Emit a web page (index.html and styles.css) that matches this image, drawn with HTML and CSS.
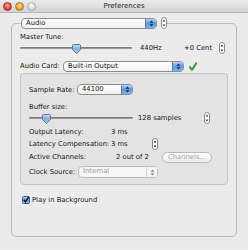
FILE: index.html
```html
<!DOCTYPE html>
<html lang="en">
<head>
    <meta charset="UTF-8">
    <title>Preferences</title>
    <link rel="stylesheet" href="styles.css">
</head>
<body>
    <div class="window">
        <div class="titlebar">
            <div class="lights">
                <span class="light red"></span>
                <span class="light yellow"></span>
                <span class="light off"></span>
            </div>
            <div class="title">Preferences</div>
        </div>

        <fieldset class="group">
            <legend class="group-legend">
                <div class="group-head">
                    <div class="popup audio-popup">
                        <span class="popup-text">Audio</span>
                        <span class="popup-cap"><svg width="5" height="7" viewBox="0 0 5 7"><path d="M2.5 0.5 L4.5 2.8 H0.5Z M2.5 6.5 L4.5 4.2 H0.5Z" fill="#1c2b45"/></svg></span>
                    </div>
                    <span class="stepper"><svg width="6" height="12" viewBox="0 0 6 12"><rect x=".5" y=".5" width="5" height="11" rx="2.5" fill="#fff" stroke="#8c8c8c"/><path d="M3 2.6 L4.4 4.6 H1.6Z M3 9.4 L4.4 7.4 H1.6Z" fill="#333"/></svg></span>
                </div>
            </legend>

            <div class="label-row tune-label">Master Tune:</div>
            <div class="slider-row">
                <div class="slider tune-slider">
                    <span class="track"></span>
                    <span class="thumb" style="left: 52px;"><svg width="9" height="10" viewBox="0 0 9 10"><defs><linearGradient id="tb1" x1="0" y1="0" x2="0" y2="1"><stop offset="0" stop-color="#c9e0f7"/><stop offset="0.5" stop-color="#7fb2e8"/><stop offset="1" stop-color="#a8d0f7"/></linearGradient></defs><path d="M0.5 1.5 Q0.5 0.5 1.5 0.5 H7.5 Q8.5 0.5 8.5 1.5 V5.5 L4.5 9.5 L0.5 5.5Z" fill="url(#tb1)" stroke="#5f7394"/></svg></span>
                </div>
                <span class="hz">440Hz</span>
                <span class="cent">+0 Cent</span>
                <span class="stepper"><svg width="6" height="12" viewBox="0 0 6 12"><rect x=".5" y=".5" width="5" height="11" rx="2.5" fill="#fff" stroke="#8c8c8c"/><path d="M3 2.6 L4.4 4.6 H1.6Z M3 9.4 L4.4 7.4 H1.6Z" fill="#333"/></svg></span>
            </div>

            <div class="card-row">
                <span class="card-label">Audio Card:</span>
                <div class="popup card-popup">
                    <span class="popup-text">Built-in Output</span>
                    <span class="popup-cap"><svg width="5" height="7" viewBox="0 0 5 7"><path d="M2.5 0.5 L4.5 2.8 H0.5Z M2.5 6.5 L4.5 4.2 H0.5Z" fill="#1c2b45"/></svg></span>
                </div>
                <span class="ok-mark"><svg width="8" height="9" viewBox="0 0 8 9"><path d="M0.9 5 L3 7.8 L7.3 1.2" fill="none" stroke="#2f9a2a" stroke-width="2" stroke-linecap="round" stroke-linejoin="round"/></svg></span>
            </div>

            <div class="subgroup">
                <div class="sample-row">
                    <span class="sample-label">Sample Rate:</span>
                    <div class="popup rate-popup">
                        <span class="popup-text">44100</span>
                        <span class="popup-cap"><svg width="5" height="7" viewBox="0 0 5 7"><path d="M2.5 0.5 L4.5 2.8 H0.5Z M2.5 6.5 L4.5 4.2 H0.5Z" fill="#1c2b45"/></svg></span>
                    </div>
                </div>

                <div class="label-row buffer-label">Buffer size:</div>
                <div class="slider-row">
                    <div class="slider buffer-slider">
                        <span class="track"></span>
                        <span class="thumb" style="left: 13px;"><svg width="9" height="10" viewBox="0 0 9 10"><defs><linearGradient id="tb2" x1="0" y1="0" x2="0" y2="1"><stop offset="0" stop-color="#c9e0f7"/><stop offset="0.5" stop-color="#7fb2e8"/><stop offset="1" stop-color="#a8d0f7"/></linearGradient></defs><path d="M0.5 1.5 Q0.5 0.5 1.5 0.5 H7.5 Q8.5 0.5 8.5 1.5 V5.5 L4.5 9.5 L0.5 5.5Z" fill="url(#tb2)" stroke="#5f7394"/></svg></span>
                    </div>
                    <span class="samples">128 samples</span>
                    <span class="stepper"><svg width="6" height="12" viewBox="0 0 6 12"><rect x=".5" y=".5" width="5" height="11" rx="2.5" fill="#fff" stroke="#8c8c8c"/><path d="M3 2.6 L4.4 4.6 H1.6Z M3 9.4 L4.4 7.4 H1.6Z" fill="#333"/></svg></span>
                </div>

                <div class="info-row first">
                    <span class="info-label">Output Latency:</span>
                    <span class="info-value">3 ms</span>
                </div>
                <div class="info-row">
                    <span class="info-label">Latency Compensation:</span>
                    <span class="info-value">3 ms</span>
                    <span class="stepper"><svg width="6" height="12" viewBox="0 0 6 12"><rect x=".5" y=".5" width="5" height="11" rx="2.5" fill="#fff" stroke="#8c8c8c"/><path d="M3 2.6 L4.4 4.6 H1.6Z M3 9.4 L4.4 7.4 H1.6Z" fill="#333"/></svg></span>
                </div>
                <div class="info-row channels-row">
                    <span class="info-label">Active Channels:</span>
                    <span class="info-value wide">2 out of 2</span>
                    <span class="button disabled">Channels...</span>
                </div>
                <div class="info-row clock-row">
                    <span class="clock-label">Clock Source:</span>
                    <div class="popup clock-popup disabled">
                        <span class="popup-text">Internal</span>
                        <span class="popup-cap"><svg width="5" height="7" viewBox="0 0 5 7"><path d="M2.5 0.5 L4.5 2.8 H0.5Z M2.5 6.5 L4.5 4.2 H0.5Z" fill="#8a8a8a"/></svg></span>
                    </div>
                </div>
            </div>

            <div class="check-row">
                <span class="checkbox"><svg width="8" height="8" viewBox="0 0 8 8"><defs><linearGradient id="cb" x1="0" y1="0" x2="0" y2="1"><stop offset="0" stop-color="#b7d6f6"/><stop offset="0.5" stop-color="#5b9be3"/><stop offset="1" stop-color="#8cc2f5"/></linearGradient></defs><rect x=".5" y=".5" width="7" height="7" rx="1" fill="url(#cb)" stroke="#3e5f8f"/><path d="M1.8 3.8 L3.4 5.8 L6.8 0.8" fill="none" stroke="#111" stroke-width="1.4"/></svg></span>
                <span class="check-label">Play in Background</span>
            </div>
        </fieldset>
    </div>
</body>
</html>
```

FILE: styles.css
```css
* {
    margin: 0;
    padding: 0;
    box-sizing: border-box;
}

body {
    font-family: 'DejaVu Sans', sans-serif;
    font-size: 6.8px;
    color: #161616;
    background: #ececec;
    white-space: nowrap;
}

.window {
    width: 248px;
    height: 250px;
    overflow: hidden;
    background: repeating-linear-gradient(#eeeeee 0 1px, #e9e9e9 1px 2px);
}

/* title bar */

.titlebar {
    height: 13px;
    display: grid;
    grid-template-columns: 1fr auto 1fr;
    align-items: center;
    background: linear-gradient(#ececec, #d2d2d2);
    border-bottom: 1px solid #b4b4b4;
}

.lights {
    display: flex;
    gap: 3px;
    padding-left: 3px;
}

.light {
    width: 9px;
    height: 9px;
    border-radius: 50%;
}

.light.red {
    background: radial-gradient(circle at 50% 35%, #ffb0a0, #e2493b 55%, #a3261c);
    border: 1px solid #9b3a32;
}

.light.yellow {
    background: radial-gradient(circle at 50% 35%, #ffe0a0, #f0a531 55%, #b8741a);
    border: 1px solid #a67a2e;
}

.light.off {
    background: radial-gradient(circle at 50% 35%, #ffffff, #dcdcdc 60%, #c4c4c4);
    border: 1px solid #a9a9a9;
}

.title {
    color: #262626;
    font-size: 7px;
}

/* outer group */

.group {
    margin: 4px 0 0 11px;
    width: 226px;
    height: 220px;
    min-width: 0;
    padding: 0 8px;
    border: 1px solid #bababa;
    border-radius: 5px;
}

.group-legend {
    margin-left: 1px;
    padding: 0;
}

.group-head {
    display: flex;
    align-items: center;
    gap: 4px;
    height: 12px;
}

/* controls */

.popup {
    display: flex;
    height: 11px;
    border: 1px solid #8e8e8e;
    border-radius: 4px;
    overflow: hidden;
    background: linear-gradient(#ffffff, #f1f1f1);
}

.popup-text {
    flex: 1;
    padding-left: 4px;
    line-height: 9px;
}

.popup-cap {
    width: 11px;
    display: flex;
    align-items: center;
    justify-content: center;
    border-left: 1px solid #5a7db3;
    background: linear-gradient(#b3d4f5, #5b98e2 50%, #79b6f4);
}

.popup.disabled {
    border-color: #bdbdbd;
    color: #9a9a9a;
    background: #f6f6f6;
}

.popup.disabled .popup-cap {
    border-left-color: #d4d4d4;
    background: #f6f6f6;
}

.stepper {
    display: flex;
    width: 6px;
    height: 12px;
}

.audio-popup {
    width: 136px;
}

.label-row {
    height: 10px;
    line-height: 10px;
}

.tune-label {
    margin-top: 3px;
}

.slider-row {
    display: flex;
    align-items: center;
    height: 12px;
}

.slider {
    position: relative;
    height: 12px;
}

.track {
    position: absolute;
    left: 0;
    right: 0;
    top: 5px;
    height: 2px;
    border-radius: 1px;
    background: linear-gradient(#6f6f6f, #a6a6a6);
}

.thumb {
    position: absolute;
    top: 2px;
    display: flex;
}

.tune-slider {
    width: 112px;
}

.hz {
    margin-left: 8px;
    width: 44px;
}

.cent {
    width: 35px;
}

.card-row {
    display: flex;
    align-items: center;
    height: 12px;
    margin-top: 6px;
}

.card-label {
    width: 43px;
}

.card-popup {
    width: 121px;
}

.ok-mark {
    display: flex;
    margin-left: 5px;
}

/* inner group */

.subgroup {
    margin-top: 1px;
    padding: 10px 8px 6px;
    border: 1px solid #c3c3c3;
    border-radius: 4px;
    background: #e3e3e3;
}

.sample-row {
    display: flex;
    align-items: center;
    height: 11px;
}

.sample-label {
    width: 48px;
}

.rate-popup {
    width: 56px;
}

.buffer-label {
    margin-top: 7px;
}

.buffer-slider {
    width: 104px;
}

.samples {
    margin-left: 5px;
    width: 66px;
}

.info-row {
    display: flex;
    align-items: center;
    height: 12px;
}

.info-row.first {
    margin-top: 2px;
}

.info-label {
    width: 82px;
}

.info-value {
    width: 41px;
}

.info-value.wide {
    width: 51px;
    padding-left: 5px;
}

.channels-row {
    margin-top: 1px;
}

.button {
    width: 50px;
    height: 11px;
    line-height: 9px;
    text-align: center;
    border: 1px solid #b8b8b8;
    border-radius: 6px;
    background: linear-gradient(#ffffff, #ececec);
}

.button.disabled {
    color: #a2a2a2;
}

.clock-row {
    margin-top: 3px;
}

.clock-label {
    width: 49px;
}

.clock-popup {
    width: 80px;
    height: 12px;
}

.check-row {
    display: flex;
    align-items: center;
    height: 10px;
    margin-top: 10px;
    padding-left: 2px;
}

.checkbox {
    display: flex;
    margin-right: 2px;
}
```
